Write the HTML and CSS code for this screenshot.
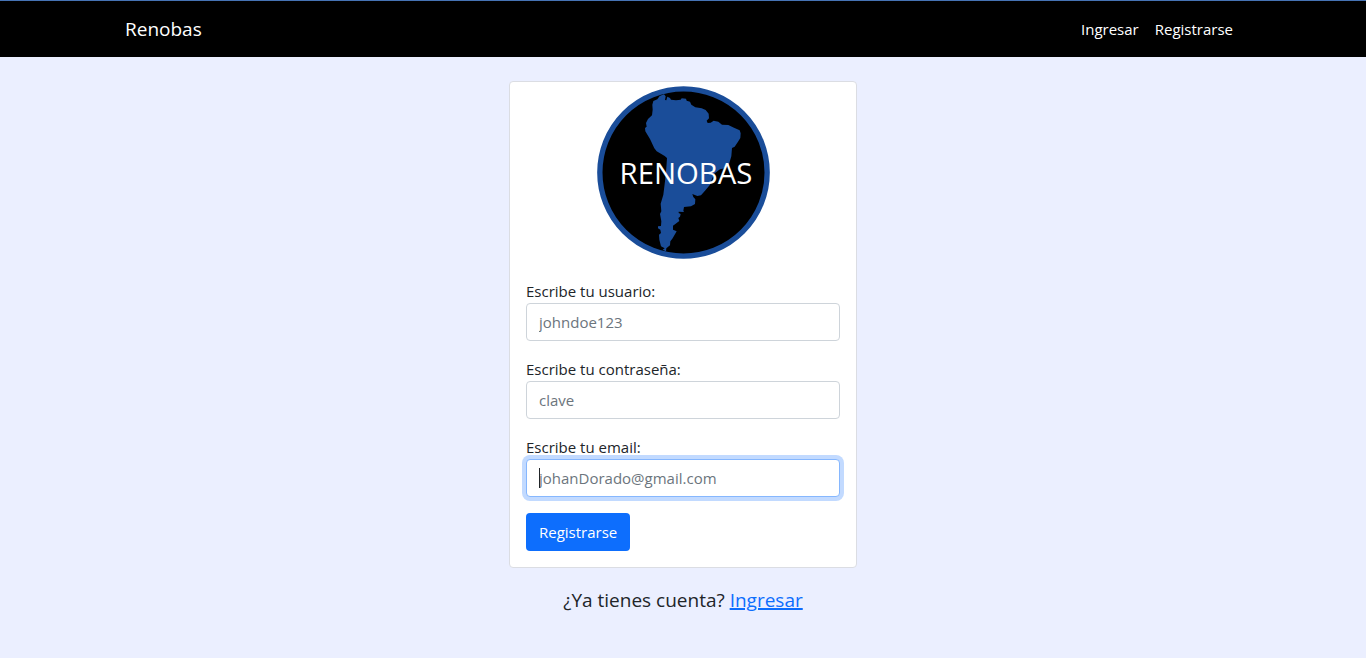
FILE: index.html
```
<!DOCTYPE html>
<html lang="es">
<head>
<meta charset="utf-8">
<meta name="viewport" content="width=device-width, initial-scale=1">
<title>Renobas</title>
<link rel="stylesheet" href="styles.css">
</head>
<body>
<header class="navbar">
  <nav class="container">
    <a class="brand" href="#">Renobas</a>
    <div class="nav-links">
      <a href="#">Ingresar</a>
      <a href="#">Registrarse</a>
    </div>
  </nav>
</header>
<main class="page">
  <section class="card">
    <svg class="logo" viewBox="21 24 519 519" role="img" aria-label="Renobas">
      <circle class="logo-disc" cx="280.5" cy="283.5" r="251"/>
      <path class="logo-map" d="M222 49L227 55 225 66 229 67 232 56 240 60 243 65 258 67 272 65 275 61 288 62 290 68 300 71 304 80 316 88 335 91 347 96 356 107 357 121 350 128 353 135 362 134 371 128 385 131 396 140 415 141 432 149 449 157 452 166 451 180 444 191 434 206 426 210 424 235 416 262 408 270 390 274 374 286 366 302 360 320 345 338 333 352 322 354 307 348 310 357 316 364 315 378 303 385 282 387 280 398 282 402 266 401 266 405 272 408 270 416 265 420 268 429 249 443 249 455 260 460 254 470 247 482 241 490 240 502 229 511 228 520 218 515 224 511 213 505 208 485 207 470 213 465 211 455 204 451 204 445 213 444 214 430 210 408 214 400 212 377 220 350 225 310 229 270 231 240 224 234 200 220 193 211 180 183 166 160 165 150 170 146 168 135 174 123 186 112 188 95 187 80 190 69 202 64 209 54Z"/>
      <text class="logo-text" x="288" y="317" text-anchor="middle">RENOBAS</text>
    </svg>
    <form class="form">
      <div class="field">
        <label for="user">Escribe tu usuario:</label>
        <input id="user" type="text" placeholder="johndoe123">
      </div>
      <div class="field">
        <label for="password">Escribe tu contraseña:</label>
        <input id="password" type="password" placeholder="clave">
      </div>
      <div class="field">
        <label for="email">Escribe tu email:</label>
        <div class="input-wrap">
          <input class="active" id="email" type="email" placeholder="johanDorado@gmail.com">
          <span class="caret"></span>
        </div>
      </div>
      <button class="btn" type="submit">Registrarse</button>
    </form>
  </section>
  <p class="switch">¿Ya tienes cuenta? <a href="#">Ingresar</a></p>
</main>
</body>
</html>
```
FILE: styles.css
```
* {
  box-sizing: border-box;
}

body {
  margin: 0;
  min-height: 100vh;
  background: #ebefff;
  color: #212529;
  font-family: "Open Sans", "Noto Sans", sans-serif;
  font-size: 15px;
  font-weight: 400;
  line-height: 24px;
}

.navbar {
  border-top: 1px solid #4673b4;
  background: #000;
}

.container {
  display: flex;
  align-items: center;
  justify-content: space-between;
  max-width: 1140px;
  min-height: 56px;
  margin: 0 auto;
  padding: 0 12px;
}

.navbar a {
  color: #fff;
  text-decoration: none;
}

.navbar .brand {
  font-size: 19px;
}

.nav-links {
  display: flex;
  gap: 16px;
  padding-right: 8px;
}

.page {
  display: flex;
  flex-direction: column;
  align-items: center;
  padding: 24px 12px;
}

.card {
  width: 100%;
  max-width: 348px;
  border: 1px solid #dbdde3;
  border-radius: 4px;
  background: #fff;
}

.logo {
  display: block;
  width: 173px;
  height: 173px;
  margin: 4px auto 0;
}

.logo-disc {
  fill: #000;
  stroke: #1a4d99;
  stroke-width: 16px;
}

.logo-map {
  fill: #1a4d99;
}

.logo-text {
  fill: #fff;
  font-size: 88px;
}

.form {
  display: flex;
  flex-direction: column;
  align-items: flex-start;
  gap: 16px;
  padding: 20px 16px 16px;
}

.field {
  width: 100%;
}

.field label {
  display: block;
}

.field input {
  display: block;
  width: 100%;
  height: 38px;
  padding: 6px 12px;
  border: 1px solid #ced4da;
  border-radius: 4px;
  outline: 0;
  background: #fff;
  color: #212529;
  font: inherit;
}

.field input::placeholder {
  color: #6c757d;
  opacity: 1;
}

.field input:focus,
.field .active {
  border-color: #86b7fe;
  box-shadow: 0 0 0 4px #c2daff;
}

.input-wrap {
  position: relative;
}

.caret {
  position: absolute;
  top: 9px;
  left: 13px;
  width: 1px;
  height: 20px;
  background: #212529;
}

.btn {
  height: 38px;
  padding: 0 13px;
  border: 0;
  border-radius: 4px;
  background: #0d6efd;
  color: #fff;
  font: inherit;
}

.switch {
  margin: 16px 0 0;
  font-size: 19px;
  line-height: 32px;
}

.switch a {
  color: #0d6efd;
  text-decoration-thickness: 2px;
}
```
